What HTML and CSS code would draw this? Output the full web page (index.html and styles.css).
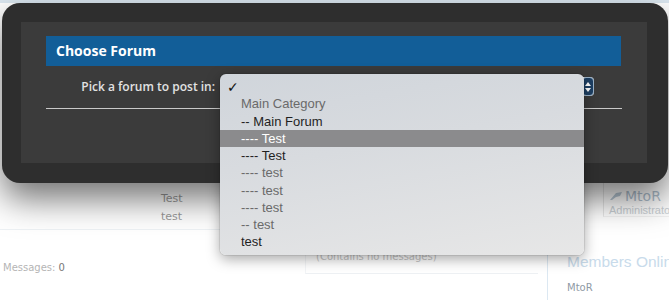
FILE: index.html
```html
<!DOCTYPE html>
<html lang="en">
<head>
    <meta charset="UTF-8">
    <meta name="viewport" content="width=device-width, initial-scale=1.0">
    <title>Choose Forum</title>
    <link rel="stylesheet" href="styles.css">
</head>
<body>
    <div class="topband"></div>
    <div class="page">
        <div class="main">
            <div class="node">
                <div class="node-sub">Test</div>
                <div class="node-sub">test</div>
            </div>
            <div class="node node-last">
                <div class="stats">Messages: <span>0</span></div>
                <div class="lastpost">(Contains no messages)</div>
            </div>
        </div>
        <div class="sidebar">
            <div class="staff">
                <div class="staff-name">
                    <svg width="14" height="10" viewBox="0 0 14 10"><path d="M1 9 L7 2 L13 1 L11 5 L7 6 L3 9 Z" fill="#b9c9d6"/></svg>
                    MtoR
                </div>
                <div class="staff-title">Administrator</div>
            </div>
            <h3 class="side-head">Members Online</h3>
            <div class="side-user">MtoR</div>
        </div>
    </div>

    <div class="overlay">
        <div class="overlay-inner">
            <h2 class="overlay-title">Choose Forum</h2>
            <div class="form-row">
                <label for="forum">Pick a forum to post in:</label>
                <div class="select-wrap">
                    <div class="select-box">
                        <span class="stepper">
                            <svg width="8" height="12" viewBox="0 0 8 12"><path d="M4 1 L7 5 L1 5 Z M4 11 L7 7 L1 7 Z" fill="#fff"/></svg>
                        </span>
                    </div>
                    <ul class="popup" id="forum">
                        <li class="checked"><span class="check">✓</span></li>
                        <li class="muted">Main Category</li>
                        <li>-- Main Forum</li>
                        <li class="hover">---- Test</li>
                        <li>---- Test</li>
                        <li class="muted">---- test</li>
                        <li class="muted">---- test</li>
                        <li class="muted">---- test</li>
                        <li class="muted">-- test</li>
                        <li>test</li>
                    </ul>
                </div>
            </div>
            <div class="form-rule"></div>
        </div>
    </div>
</body>
</html>
```

FILE: styles.css
```css
* {
    margin: 0;
    padding: 0;
    box-sizing: border-box;
}
body {
    background: #fff;
    font-family: 'Liberation Sans', Arial, sans-serif;
    width: 669px;
    height: 300px;
    overflow: hidden;
    position: relative;
}
.topband {
    height: 3px;
    background: #dbe7f0;
}
.page {
    display: grid;
    grid-template-columns: 547px 122px;
    overflow: hidden;
}
.main {
    font-family: 'DejaVu Sans', sans-serif;
}
.node {
    height: 227px;
    padding: 187px 0 0 161px;
    border-bottom: 1px solid #eef2f5;
}
.node-sub {
    font-size: 11px;
    line-height: 18px;
    color: #9a9a9a;
}
.node-last {
    height: 70px;
    padding: 0 0 0 3px;
    display: flex;
    align-items: flex-start;
    border-bottom: none;
}
.stats {
    font-size: 10px;
    color: #b5b5b5;
    margin-top: 32px;
    width: 302px;
}
.stats span {
    color: #777;
}
.lastpost {
    font-size: 10px;
    color: #c5c5c5;
    width: 233px;
    height: 25px;
    margin-top: 19px;
    padding: 2px 0 0 10px;
    border-bottom: 1px solid #eef1f4;
    border-left: 1px solid #f3f5f7;
}
.sidebar {
    font-family: 'DejaVu Sans', sans-serif;
    padding-top: 180px;
    overflow: hidden;
}
.staff {
    margin-left: 56px;
    height: 34px;
    padding: 5px 0 0 5px;
    border-left: 1px solid #e8e8e8;
    border-bottom: 1px solid #f2f2f2;
    white-space: nowrap;
}
.staff-name {
    font-size: 14px;
    color: #b0c1cf;
    display: flex;
    align-items: center;
    gap: 2px;
}
.staff-title {
    font-family: 'Liberation Sans', Arial, sans-serif;
    font-size: 11px;
    color: #c9cfd4;
}
.side-head {
    margin-top: 18px;
    padding: 18px 0 0 19px;
    border-left: 1px solid #dce8f2;
    font-family: 'Liberation Sans', Arial, sans-serif;
    font-size: 15.5px;
    font-weight: normal;
    color: #c8dbeb;
    white-space: nowrap;
}
.side-user {
    padding: 11px 0 12px 19px;
    border-left: 1px solid #dce8f2;
    font-size: 10px;
    color: #8f9aa5;
}

/* modal */
.overlay {
    position: absolute;
    left: 2px;
    top: 3px;
    width: 666px;
    height: 180px;
    background: #2e2e2e;
    border-radius: 18px;
    padding: 19px 21px 20px 19px;
    box-shadow: 0 16px 34px rgba(0, 0, 0, 0.55);
}
.overlay-inner {
    height: 100%;
    background: #3b3b3b;
    padding: 14px 26px 0 25px;
}
.overlay-title {
    height: 30px;
    background: #125e98;
    color: #fff;
    font-family: 'Open Sans', sans-serif;
    font-size: 14px;
    font-weight: bold;
    line-height: 30px;
    padding-left: 10px;
}
.form-row {
    display: grid;
    grid-template-columns: 169px 372px;
    column-gap: 7px;
    align-items: center;
    padding: 11px 0 12px;
}
.form-row label {
    text-align: right;
    font-family: 'Open Sans', sans-serif;
    font-size: 12px;
    font-weight: 600;
    color: #e2e2e2;
}
.select-wrap {
    position: relative;
    height: 19px;
}
.select-box {
    height: 19px;
    background: #f2f2f2;
    border-radius: 4px;
    display: flex;
    justify-content: flex-end;
}
.stepper {
    width: 12px;
    height: 19px;
    background: #1d3f63;
    border: 1px solid #9bb3c9;
    border-radius: 4px;
    display: flex;
    align-items: center;
    justify-content: center;
}
.form-rule {
    height: 1px;
    background: #c9c9c9;
    margin-right: -1px;
}

/* open dropdown */
.popup {
    position: absolute;
    left: -2px;
    top: -3px;
    width: 364px;
    height: 181px;
    list-style: none;
    padding: 4px 0;
    border-radius: 6px;
    background: linear-gradient(170deg, #d0d5db 0%, #d8dbdf 40%, #e7e7e7 100%);
    box-shadow: 0 4px 14px rgba(0, 0, 0, 0.35), 0 0 0 1px rgba(0, 0, 0, 0.08);
    font-family: 'Liberation Sans', Arial, sans-serif;
    font-size: 13px;
    z-index: 2;
}
.popup li {
    height: 17.25px;
    line-height: 17.25px;
    padding-left: 21px;
    color: #1f1f1f;
    position: relative;
    white-space: nowrap;
}
.popup li.muted {
    color: #6a6a6a;
}
.popup li.hover {
    background: #8b8b8d;
    color: #fff;
}
.check {
    position: absolute;
    left: 7px;
    top: 1px;
    font-family: 'DejaVu Sans', sans-serif;
    font-weight: bold;
    font-size: 14px;
    color: #111;
}
```
